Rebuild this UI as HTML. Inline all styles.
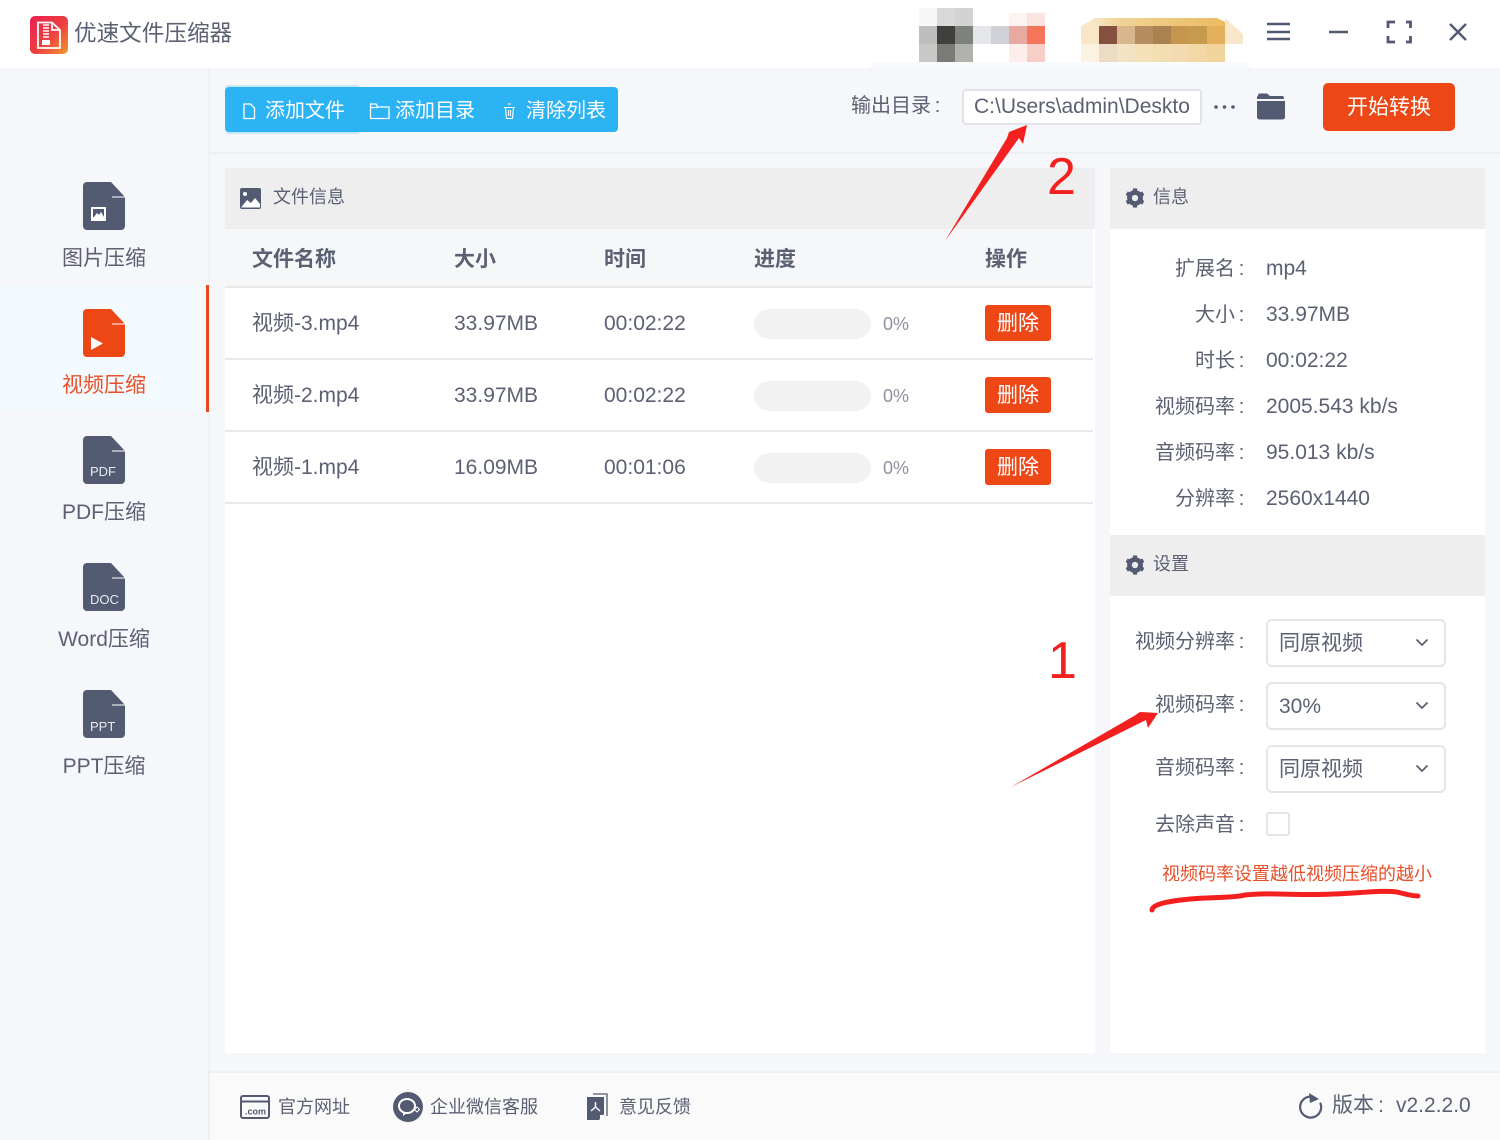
<!DOCTYPE html>
<html lang="zh"><head><meta charset="utf-8"><title>优速文件压缩器</title>
<style>
html,body{margin:0;padding:0}
body{width:1500px;height:1140px;position:relative;overflow:hidden;background:#f5f7fa;font-family:"Liberation Sans","Noto Sans CJK SC",sans-serif;color:#5b6173;font-size:21px}
.a{position:absolute}
.t{position:absolute;white-space:nowrap;line-height:32px;height:32px}
.r{position:absolute;white-space:nowrap;line-height:32px;height:32px;text-align:right;width:160px;left:1088px}
.c{position:absolute;white-space:nowrap;line-height:32px;height:32px;text-align:center;width:208px;left:0}
.k{display:inline-block;width:13px;text-align:center}
.line{position:absolute;left:225px;width:868px;height:2px;background:#e9e9ea}
.bar{position:absolute;left:754px;width:117px;height:30px;border-radius:15px;background:#f2f2f3}
.del{position:absolute;left:985px;width:66px;height:36px;line-height:38px;text-align:center;background:#ee4716;color:#fff;border-radius:3px}
.sel{position:absolute;left:1266px;width:176px;height:44px;border:2px solid #e3e5e9;border-radius:6px;background:#fff;line-height:46px;text-indent:11px}
.sel svg{position:absolute;left:147px;top:17px}
.px{position:absolute;width:18px;height:18px}
</style></head><body>
<div class="a" style="left:0;top:0;width:1500px;height:68px;background:#fff"></div>
<svg class="a" style="left:30px;top:16px" width="38" height="38" viewBox="0 0 38 38"><defs><linearGradient id="g" x1="0" y1="0" x2="1" y2="1"><stop offset="0" stop-color="#ea2150"/><stop offset=".55" stop-color="#ee4040"/><stop offset="1" stop-color="#f2992a"/></linearGradient><linearGradient id="h" x1="0" y1="0" x2="1" y2="0"><stop offset="0" stop-color="#fbf0dc"/><stop offset=".25" stop-color="#f1d49a"/><stop offset="1" stop-color="#ebbb5f"/></linearGradient></defs><rect width="38" height="38" rx="5" fill="url(#g)"/><path d="M8 6.500H22L30 14V32H8Z M22 6.500V14H30" fill="none" stroke="#fff" stroke-width="1.800"/><path d="M13 9h6M13 12h6M13 15h6M13 18h6M13 21h6" stroke="#fff" stroke-width="1.500"/><rect x="12" y="24" width="8" height="5" fill="#fff"/></svg>
<div class="t" style="left:74px;top:18px;font-size:22.6px">优速文件压缩器</div>

<!-- pixelated blocks -->
<div class="a" style="left:870px;top:62px;width:380px;height:6px;background:#fafbfc"></div>
<div class="px" style="left:919px;top:8px;background:#f7f7f7"></div><div class="px" style="left:937px;top:8px;background:#d8d9d8"></div><div class="px" style="left:955px;top:8px;background:#d2d4d2"></div>
<div class="px" style="left:1009px;top:13px;height:13px;background:#fdf3f1"></div><div class="px" style="left:1027px;top:13px;height:13px;background:#fbe3df"></div>
<div class="px" style="left:919px;top:26px;background:#bdbebd"></div><div class="px" style="left:937px;top:26px;background:#3f403b"></div><div class="px" style="left:955px;top:26px;background:#7f817b"></div><div class="px" style="left:973px;top:26px;background:#e6e7ea"></div><div class="px" style="left:991px;top:26px;background:#d0d2d8"></div><div class="px" style="left:1009px;top:26px;background:#e8a9a0"></div><div class="px" style="left:1027px;top:26px;background:#f5755a"></div>
<div class="px" style="left:919px;top:44px;background:#c8c9c6"></div><div class="px" style="left:937px;top:44px;background:#7a7b77"></div><div class="px" style="left:955px;top:44px;background:#b0b2ae"></div><div class="px" style="left:1009px;top:44px;background:#fdeeeb"></div><div class="px" style="left:1027px;top:44px;background:#f7cfc8"></div>
<svg class="a" style="left:1081px;top:18px" width="165" height="44"><polygon points="144,0 162,16 162,26 144,26" fill="#f8e8cb"/><polygon points="0,8 14,0 136,0 144,4 144,8" fill="url(#h)"/></svg>
<div class="px" style="left:1081px;top:26px;background:#f8e6c6"></div><div class="px" style="left:1099px;top:26px;background:#85503f"></div><div class="px" style="left:1117px;top:26px;background:#d9b78d"></div><div class="px" style="left:1135px;top:26px;background:#b58d5f"></div><div class="px" style="left:1153px;top:26px;background:#a9824f"></div><div class="px" style="left:1171px;top:26px;background:#c4964e"></div><div class="px" style="left:1189px;top:26px;background:#c89a4e"></div><div class="px" style="left:1207px;top:26px;background:#e3b15b"></div>
<div class="px" style="left:1081px;top:44px;background:#fbf2e1"></div><div class="px" style="left:1099px;top:44px;background:#ecdcc5"></div><div class="px" style="left:1117px;top:44px;background:#f4e2c4"></div><div class="px" style="left:1135px;top:44px;background:#f5e0b8"></div><div class="px" style="left:1153px;top:44px;background:#f3deb2"></div><div class="px" style="left:1171px;top:44px;background:#f3dab0"></div><div class="px" style="left:1189px;top:44px;background:#f2d8a5"></div><div class="px" style="left:1207px;top:44px;background:#f0d49c"></div>

<!-- window controls -->
<svg class="a" style="left:1260px;top:14px" width="220" height="36" fill="none" stroke="#515a72" stroke-width="2.400"><path d="M7 10H30M7 18H30M7 25H30"/><path d="M69 18H88"/><path d="M128 14V8H135M146 8H150.500V14M128 22V28H135M146 28H150.500V22" stroke-width="2.800"/><path d="M190 10L206 26M206 10L190 26"/></svg>

<!-- sidebar -->
<div class="a" style="left:208px;top:68px;width:2px;height:1072px;background:#eff0f3"></div>
<div class="a" style="left:0;top:284px;width:206px;height:128px;background:#f2fafd"></div>
<div class="a" style="left:206px;top:285px;width:3px;height:127px;background:#e8481e"></div>

<svg class="a" style="left:83px;top:182px" width="43" height="48"><path d="M4 0H28L42 15V44a4 4 0 0 1-4 4H4a4 4 0 0 1-4-4V4a4 4 0 0 1 4-4Z" fill="#535b72"/><path d="M29 15H42" stroke="#fff" stroke-width="1"/><rect x="8" y="25" width="15" height="14" fill="#fff"/><rect x="10" y="27" width="11" height="8" fill="#535b72"/><path d="M11 35l3-4 2 2 2-3 3 5Z" fill="#fff"/></svg>
<div class="c" style="top:243px">图片压缩</div>
<svg class="a" style="left:83px;top:309px" width="43" height="48"><path d="M4 0H28L42 15V44a4 4 0 0 1-4 4H4a4 4 0 0 1-4-4V4a4 4 0 0 1 4-4Z" fill="#ee4716"/><path d="M29 15H42" stroke="#fff" stroke-width="1"/><path d="M8 28L20 34.500L8 41Z" fill="#fff"/></svg>
<div class="c" style="top:370px;color:#e8502c">视频压缩</div>
<svg class="a" style="left:83px;top:436px" width="43" height="48"><path d="M4 0H28L42 15V44a4 4 0 0 1-4 4H4a4 4 0 0 1-4-4V4a4 4 0 0 1 4-4Z" fill="#535b72"/><path d="M29 15H42" stroke="#fff" stroke-width="1"/><text x="7" y="40" font-size="13" fill="#e8eaf0" font-family="Liberation Sans">PDF</text></svg>
<div class="c" style="top:497px">PDF压缩</div>
<svg class="a" style="left:83px;top:563px" width="43" height="48"><path d="M4 0H28L42 15V44a4 4 0 0 1-4 4H4a4 4 0 0 1-4-4V4a4 4 0 0 1 4-4Z" fill="#535b72"/><path d="M29 15H42" stroke="#fff" stroke-width="1"/><text x="7" y="41" font-size="13" fill="#e8eaf0" font-family="Liberation Sans">DOC</text></svg>
<div class="c" style="top:624px">Word压缩</div>
<svg class="a" style="left:83px;top:690px" width="43" height="48"><path d="M4 0H28L42 15V44a4 4 0 0 1-4 4H4a4 4 0 0 1-4-4V4a4 4 0 0 1 4-4Z" fill="#535b72"/><path d="M29 15H42" stroke="#fff" stroke-width="1"/><text x="7" y="41" font-size="13" fill="#e8eaf0" font-family="Liberation Sans">PPT</text></svg>
<div class="c" style="top:751px">PPT压缩</div>

<!-- toolbar -->
<div class="a" style="left:225px;top:85px;width:135px;height:49px;background:#c5e9fa;border-radius:3px"></div>
<div class="a" style="left:225px;top:87px;width:393px;height:45px;background:#2cb3f4;border-radius:4px"></div>
<svg class="a" style="left:225px;top:87px" width="393" height="45" fill="none" stroke="#fff" stroke-width="1.300"><path d="M19 17H25.500L29.500 21V31.500H19Z"/><path d="M145.500 17H151L153 20H164V31.500H145.500ZM145.500 20.500H153"/><path d="M279 20.500H290M280.500 20.500L281.500 31.500H287.500L288.500 20.500M283 17H286M283.500 23V29M285.500 23V29" stroke-width="1.100"/></svg>
<div class="t" style="left:265px;top:95px;color:#fff;font-size:20px">添加文件</div>
<div class="t" style="left:395px;top:95px;color:#fff;font-size:20px">添加目录</div>
<div class="t" style="left:526px;top:95px;color:#fff;font-size:20px">清除列表</div>

<div class="t" style="left:851px;top:90px;font-size:20px">输出目录<span class="k">:</span></div>
<div class="a" style="left:962px;top:89px;width:236px;height:32px;border:2px solid #e1e3e8;border-radius:4px;background:#fff"></div>
<div class="t" style="left:974px;top:91px;font-size:21px;width:216px;overflow:hidden">C:\Users\admin\Deskto</div>
<svg class="a" style="left:1212px;top:102px" width="26" height="10" fill="#535b72"><circle cx="4" cy="5" r="1.800"/><circle cx="12.500" cy="5" r="1.800"/><circle cx="21" cy="5" r="1.800"/></svg>
<svg class="a" style="left:1256px;top:93px" width="30" height="27" fill="#535b72"><path d="M2 2.500a2 2 0 0 1 2-2H11L14 3H26a2 2 0 0 1 2 2V6H1V4Z"/><path d="M1 8H29V24a2.500 2.500 0 0 1-2.500 2.500H3.500A2.500 2.500 0 0 1 1 24Z"/></svg>
<div class="a" style="left:1323px;top:83px;width:132px;height:48px;background:#ee4716;border-radius:5px;color:#fff;text-align:center;line-height:49px">开始转换</div>
<div class="a" style="left:210px;top:152px;width:1290px;height:2px;background:#edeff2"></div>

<!-- file panel -->
<div class="a" style="left:225px;top:168px;width:870px;height:885px;background:#fff"></div>
<div class="a" style="left:225px;top:168px;width:870px;height:61px;background:#eeeeef"></div>
<div class="a" style="left:225px;top:229px;width:868px;height:58px;background:#f6f7f9"></div>
<svg class="a" style="left:240px;top:188px" width="21" height="21"><rect width="21" height="21" rx="2" fill="#535b72"/><circle cx="5" cy="6" r="2" fill="#fff"/><path d="M1 19.500L7 12L11 15L15 10L20 16V19.500Z" fill="#fff"/></svg>
<div class="t" style="left:273px;top:181px;font-size:18px">文件信息</div>
<div class="t" style="left:252px;top:244px;font-weight:700">文件名称</div>
<div class="t" style="left:454px;top:244px;font-weight:700">大小</div>
<div class="t" style="left:604px;top:244px;font-weight:700">时间</div>
<div class="t" style="left:754px;top:244px;font-weight:700">进度</div>
<div class="t" style="left:985px;top:244px;font-weight:700">操作</div>
<div class="line" style="top:286px"></div><div class="line" style="top:358px"></div><div class="line" style="top:430px"></div><div class="line" style="top:502px"></div>

<div class="t" style="left:252px;top:308px">视频-3.mp4</div><div class="t" style="left:454px;top:308px">33.97MB</div><div class="t" style="left:604px;top:308px">00:02:22</div><div class="bar" style="top:309px"></div><div class="t" style="left:883px;top:308px;font-size:18px;color:#8e929e">0%</div><div class="del" style="top:305px">删除</div>
<div class="t" style="left:252px;top:380px">视频-2.mp4</div><div class="t" style="left:454px;top:380px">33.97MB</div><div class="t" style="left:604px;top:380px">00:02:22</div><div class="bar" style="top:381px"></div><div class="t" style="left:883px;top:380px;font-size:18px;color:#8e929e">0%</div><div class="del" style="top:377px">删除</div>
<div class="t" style="left:252px;top:452px">视频-1.mp4</div><div class="t" style="left:454px;top:452px">16.09MB</div><div class="t" style="left:604px;top:452px">00:01:06</div><div class="bar" style="top:453px"></div><div class="t" style="left:883px;top:452px;font-size:18px;color:#8e929e">0%</div><div class="del" style="top:449px">删除</div>

<!-- right panel -->
<div class="a" style="left:1110px;top:168px;width:375px;height:885px;background:#fff"></div>
<div class="a" style="left:1110px;top:168px;width:375px;height:61px;background:#eeeeef"></div>
<div class="a" style="left:1110px;top:535px;width:375px;height:61px;background:#eeeeef"></div>
<svg class="a" style="left:1125px;top:188px" width="20" height="20" viewBox="0 0 24 24"><g stroke="#535b72" stroke-width="5" fill="none"><circle cx="12" cy="12" r="7"/><path d="M12 .5V23.500"/><path d="M12 .5V23.500" transform="rotate(60 12 12)"/><path d="M12 .5V23.500" transform="rotate(120 12 12)"/></g><circle cx="12" cy="12" r="3.800" fill="#eeeeef"/></svg>
<div class="t" style="left:1153px;top:181px;font-size:18px">信息</div>
<svg class="a" style="left:1125px;top:555px" width="20" height="20" viewBox="0 0 24 24"><g stroke="#535b72" stroke-width="5" fill="none"><circle cx="12" cy="12" r="7"/><path d="M12 .5V23.500"/><path d="M12 .5V23.500" transform="rotate(60 12 12)"/><path d="M12 .5V23.500" transform="rotate(120 12 12)"/></g><circle cx="12" cy="12" r="3.800" fill="#eeeeef"/></svg>
<div class="t" style="left:1153px;top:548px;font-size:18px">设置</div>

<div class="r" style="top:253px;font-size:20px">扩展名<span class="k">:</span></div><div class="t" style="left:1266px;top:253px">mp4</div>
<div class="r" style="top:299px;font-size:20px">大小<span class="k">:</span></div><div class="t" style="left:1266px;top:299px">33.97MB</div>
<div class="r" style="top:345px;font-size:20px">时长<span class="k">:</span></div><div class="t" style="left:1266px;top:345px">00:02:22</div>
<div class="r" style="top:391px;font-size:20px">视频码率<span class="k">:</span></div><div class="t" style="left:1266px;top:391px">2005.543 kb/s</div>
<div class="r" style="top:437px;font-size:20px">音频码率<span class="k">:</span></div><div class="t" style="left:1266px;top:437px">95.013 kb/s</div>
<div class="r" style="top:483px;font-size:20px">分辨率<span class="k">:</span></div><div class="t" style="left:1266px;top:483px">2560x1440</div>

<div class="r" style="top:626px;font-size:20px">视频分辨率<span class="k">:</span></div>
<div class="sel" style="top:619px">同原视频<svg width="14" height="10" fill="none" stroke="#5b6173" stroke-width="1.800"><path d="M1.500 1.500L7 7L12.500 1.500"/></svg></div>
<div class="r" style="top:689px;font-size:20px">视频码率<span class="k">:</span></div>
<div class="sel" style="top:682px">30%<svg width="14" height="10" fill="none" stroke="#5b6173" stroke-width="1.800"><path d="M1.500 1.500L7 7L12.500 1.500"/></svg></div>
<div class="r" style="top:752px;font-size:20px">音频码率<span class="k">:</span></div>
<div class="sel" style="top:745px">同原视频<svg width="14" height="10" fill="none" stroke="#5b6173" stroke-width="1.800"><path d="M1.500 1.500L7 7L12.500 1.500"/></svg></div>
<div class="r" style="top:809px;font-size:20px">去除声音<span class="k">:</span></div>
<div class="a" style="left:1266px;top:812px;width:20px;height:20px;border:2px solid #e3e5e9;border-radius:3px;background:#fff"></div>
<div class="t" style="left:1162px;top:858px;font-size:18px;color:#e8502c">视频码率设置越低视频压缩的越小</div>

<!-- annotations -->
<svg class="a" style="left:0;top:0" width="1500" height="1140">
<polygon points="945,241 1007,138 1009,132 1027,125 1023,144 1019,138" fill="#f3201f"/>
<polygon points="1011,787 1134,716 1140,712 1158,713 1148,728 1146,720" fill="#f3201f"/>
<path d="M1152 910C1152 904 1170 901 1190 899C1210 897 1235 898 1245 895C1270 892 1300 896 1333 894C1360 893 1385 890 1397 892C1405 894 1412 896 1418 896" fill="none" stroke="#f3201f" stroke-width="5" stroke-linecap="round"/>
<text x="1048" y="678" font-size="52" fill="#f3201f" font-family="Liberation Sans">1</text>
<text x="1047" y="194" font-size="52" fill="#f3201f" font-family="Liberation Sans">2</text>
</svg>

<!-- footer -->
<div class="a" style="left:210px;top:1071px;width:1290px;height:69px;background:#fafafb;border-top:2px solid #eff0f3;box-sizing:border-box"></div>
<svg class="a" style="left:240px;top:1094px" width="30" height="26"><rect x="1" y="2" width="28" height="22" rx="2" fill="none" stroke="#535b72" stroke-width="2"/><path d="M1 7.500H29" stroke="#535b72" stroke-width="2"/><text x="5" y="20.500" font-size="9" font-weight="700" fill="#535b72" font-family="Liberation Sans">.com</text></svg>
<div class="t" style="left:278px;top:1091px;font-size:18px">官方网址</div>
<svg class="a" style="left:393px;top:1092px" width="30" height="30"><circle cx="15" cy="15" r="15" fill="#535b72"/><ellipse cx="14" cy="14" rx="8" ry="7" fill="none" stroke="#fff" stroke-width="2"/><path d="M10 20L10 24L14 21" fill="#fff"/><path d="M24 15L26.500 17.500L24 20L21.500 17.500Z" fill="none" stroke="#fff" stroke-width="1"/></svg>
<div class="t" style="left:430px;top:1091px;font-size:18px">企业微信客服</div>
<svg class="a" style="left:586px;top:1093px" width="22" height="28"><path d="M7 1H21V23" fill="none" stroke="#535b72" stroke-width="1.300"/><path d="M1 4H18V21L13 27H1Z" fill="#535b72"/><path d="M9.500 9V14M9.500 14L5 18M9.500 14L14 18" stroke="#fff" stroke-width="1.400" fill="none"/><path d="M14 27V22H18Z" fill="#fff"/></svg>
<div class="t" style="left:619px;top:1091px;font-size:18px">意见反馈</div>
<svg class="a" style="left:1299px;top:1092px" width="24" height="28" fill="none" stroke="#535b72" stroke-width="2.200"><path d="M11 4.600A10.500 10.500 0 1 0 21.500 11.500" stroke-linecap="round"/><path d="M10 1L20 7L11 11Z" fill="#535b72" stroke="none"/></svg>
<div class="t" style="left:1332px;top:1090px">版本<span class="k" style="width:14px">:</span></div>
<div class="t" style="left:1396px;top:1090px;font-size:21px">v2.2.2.0</div>
</body></html>
